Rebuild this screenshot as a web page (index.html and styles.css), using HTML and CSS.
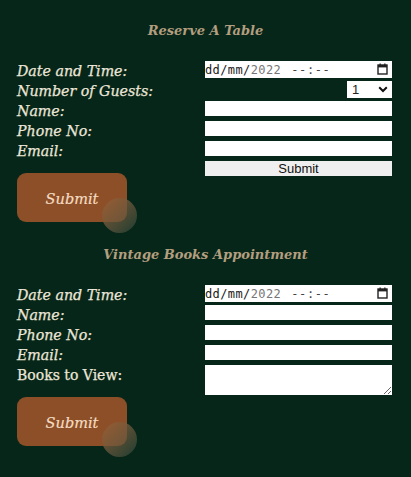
FILE: index.html
```html
<!DOCTYPE html>
<html lang="en">
<head>
<meta charset="utf-8">
<title>Reservations</title>
<link rel="stylesheet" href="styles.css">
</head>
<body>
<section class="block">
  <h2 class="title">Reserve A Table</h2>
  <form class="form">
    <div class="labels">
      <label class="lbl">Date and Time:</label>
      <label class="lbl">Number of Guests:</label>
      <label class="lbl">Name:</label>
      <label class="lbl">Phone No:</label>
      <label class="lbl">Email:</label>
      <div class="fancy">
        <button type="button" class="fancy-btn">Submit</button>
        <span class="orb"></span>
      </div>
    </div>
    <div class="fields">
      <div class="date">
        <span class="d-dark">dd/mm/</span><span class="d-gray">2022</span><span class="d-time">--:--</span>
        <svg class="cal" width="11" height="12" viewBox="0 0 11 12"><rect x="1" y="2" width="9" height="9" fill="none" stroke="#222" stroke-width="1.4"/><rect x="1" y="2" width="9" height="2.4" fill="#222"/><rect x="2.5" y="0.5" width="1.3" height="2" fill="#222"/><rect x="7.2" y="0.5" width="1.3" height="2" fill="#222"/></svg>
      </div>
      <div class="sel-row">
        <div class="sel-wrap">
          <select class="sel"><option>1</option><option>2</option></select>
          <svg class="chev" width="10" height="7" viewBox="0 0 10 7"><path d="M1.2 1.3 L5 5 L8.8 1.3" fill="none" stroke="#111" stroke-width="2"/></svg>
        </div>
      </div>
      <input class="txt" type="text">
      <input class="txt" type="text">
      <input class="txt" type="text">
      <button type="submit" class="plain">Submit</button>
    </div>
  </form>
</section>

<section class="block second">
  <h2 class="title">Vintage Books Appointment</h2>
  <form class="form">
    <div class="labels">
      <label class="lbl">Date and Time:</label>
      <label class="lbl">Name:</label>
      <label class="lbl">Phone No:</label>
      <label class="lbl">Email:</label>
      <label class="lbl upright">Books to View:</label>
      <div class="fancy">
        <button type="button" class="fancy-btn">Submit</button>
        <span class="orb"></span>
      </div>
    </div>
    <div class="fields">
      <div class="date">
        <span class="d-dark">dd/mm/</span><span class="d-gray">2022</span><span class="d-time">--:--</span>
        <svg class="cal" width="11" height="12" viewBox="0 0 11 12"><rect x="1" y="2" width="9" height="9" fill="none" stroke="#222" stroke-width="1.4"/><rect x="1" y="2" width="9" height="2.4" fill="#222"/><rect x="2.5" y="0.5" width="1.3" height="2" fill="#222"/><rect x="7.2" y="0.5" width="1.3" height="2" fill="#222"/></svg>
      </div>
      <input class="txt" type="text">
      <input class="txt" type="text">
      <input class="txt" type="text">
      <textarea class="area"></textarea>
    </div>
  </form>
</section>
</body>
</html>
```

FILE: styles.css
```css
html, body {
  margin: 0;
  padding: 0;
}
body {
  background: #07261a;
  width: 411px;
  height: 477px;
  overflow: hidden;
  padding-top: 21px;
  box-sizing: border-box;
  font-family: "DejaVu Serif", "Liberation Serif", serif;
}
.block {
  margin: 0;
}
.second {
  margin-top: 23px;
}
.title {
  margin: 0 0 20px 0;
  height: 20px;
  line-height: 20px;
  text-align: center;
  font-size: 13px;
  font-style: italic;
  font-weight: bold;
  color: #b39e7f;
}
.form {
  display: flex;
  margin: 0;
}
.labels {
  width: 188px;
  padding-left: 17px;
  display: flex;
  flex-direction: column;
}
.lbl {
  display: block;
  height: 20px;
  line-height: 20px;
  font-size: 14.2px;
  font-style: italic;
  color: #ece6d8;
  white-space: nowrap;
  -webkit-text-stroke: 0.25px #ece6d8;
}
.upright {
  font-style: normal;
  font-size: 14px;
}
.fancy {
  position: relative;
  margin-top: 12px;
  width: 110px;
  height: 49px;
}
.fancy-btn {
  width: 110px;
  height: 49px;
  border: none;
  border-radius: 9px;
  background: #8c4f27;
  color: #f5dcc2;
  font-family: "DejaVu Serif", "Liberation Serif", serif;
  font-style: italic;
  font-size: 14.5px;
  padding: 2px 0 0 0;
  -webkit-text-stroke: 0.2px #f5dcc2;
}
.orb {
  position: absolute;
  left: 85px;
  top: 25px;
  width: 35px;
  height: 35px;
  border-radius: 50%;
  background: linear-gradient(135deg, rgba(150, 92, 52, 0.95) 0%, rgba(110, 90, 62, 0.75) 50%, rgba(55, 80, 66, 0.55) 100%);
  filter: blur(0.6px);
}
.fields {
  width: 187px;
  display: flex;
  flex-direction: column;
}
.date {
  position: relative;
  height: 17px;
  margin-bottom: 3px;
  background: #fff;
  display: flex;
  align-items: center;
  font-family: "DejaVu Sans Mono", "Liberation Mono", monospace;
  font-size: 12px;
  padding-left: 0;
  box-sizing: border-box;
  white-space: pre;
}
.d-dark {
  color: #1a1a1a;
  letter-spacing: 0.4px;
}
.d-gray {
  color: #767676;
  letter-spacing: 0.4px;
}
.d-time {
  color: #444;
  margin-left: 10px;
  letter-spacing: 0.6px;
}
.cal {
  position: absolute;
  right: 4px;
  top: 2px;
}
.sel-row {
  display: flex;
  justify-content: flex-end;
  height: 17px;
  margin-bottom: 3px;
}
.sel-wrap {
  position: relative;
  width: 45px;
  height: 17px;
}
.sel {
  appearance: none;
  -webkit-appearance: none;
  display: block;
  width: 45px;
  height: 17px;
  border: 0;
  border-radius: 0;
  box-shadow: none;
  background: #fff;
  font-family: "Liberation Sans", Arial, sans-serif;
  font-size: 13px;
  color: #222;
  padding: 0 0 0 5px;
  margin: 0;
  outline: none;
}
.chev {
  position: absolute;
  right: 4px;
  top: 5px;
  pointer-events: none;
}
.txt {
  display: block;
  height: 15px;
  margin: 0 0 5px 0;
  padding: 0;
  border: none;
  background: #fff;
  width: 187px;
  box-sizing: border-box;
}
.plain {
  height: 15px;
  width: 187px;
  border: none;
  background: #efefef;
  color: #111;
  font-family: "Liberation Sans", Arial, sans-serif;
  font-size: 13px;
  line-height: 15px;
  padding: 0;
  margin: 0;
}
.area {
  display: block;
  width: 187px;
  height: 30px;
  border: none;
  padding: 0;
  margin: 0;
  background: #fff;
  box-sizing: border-box;
  resize: both;
}
```
